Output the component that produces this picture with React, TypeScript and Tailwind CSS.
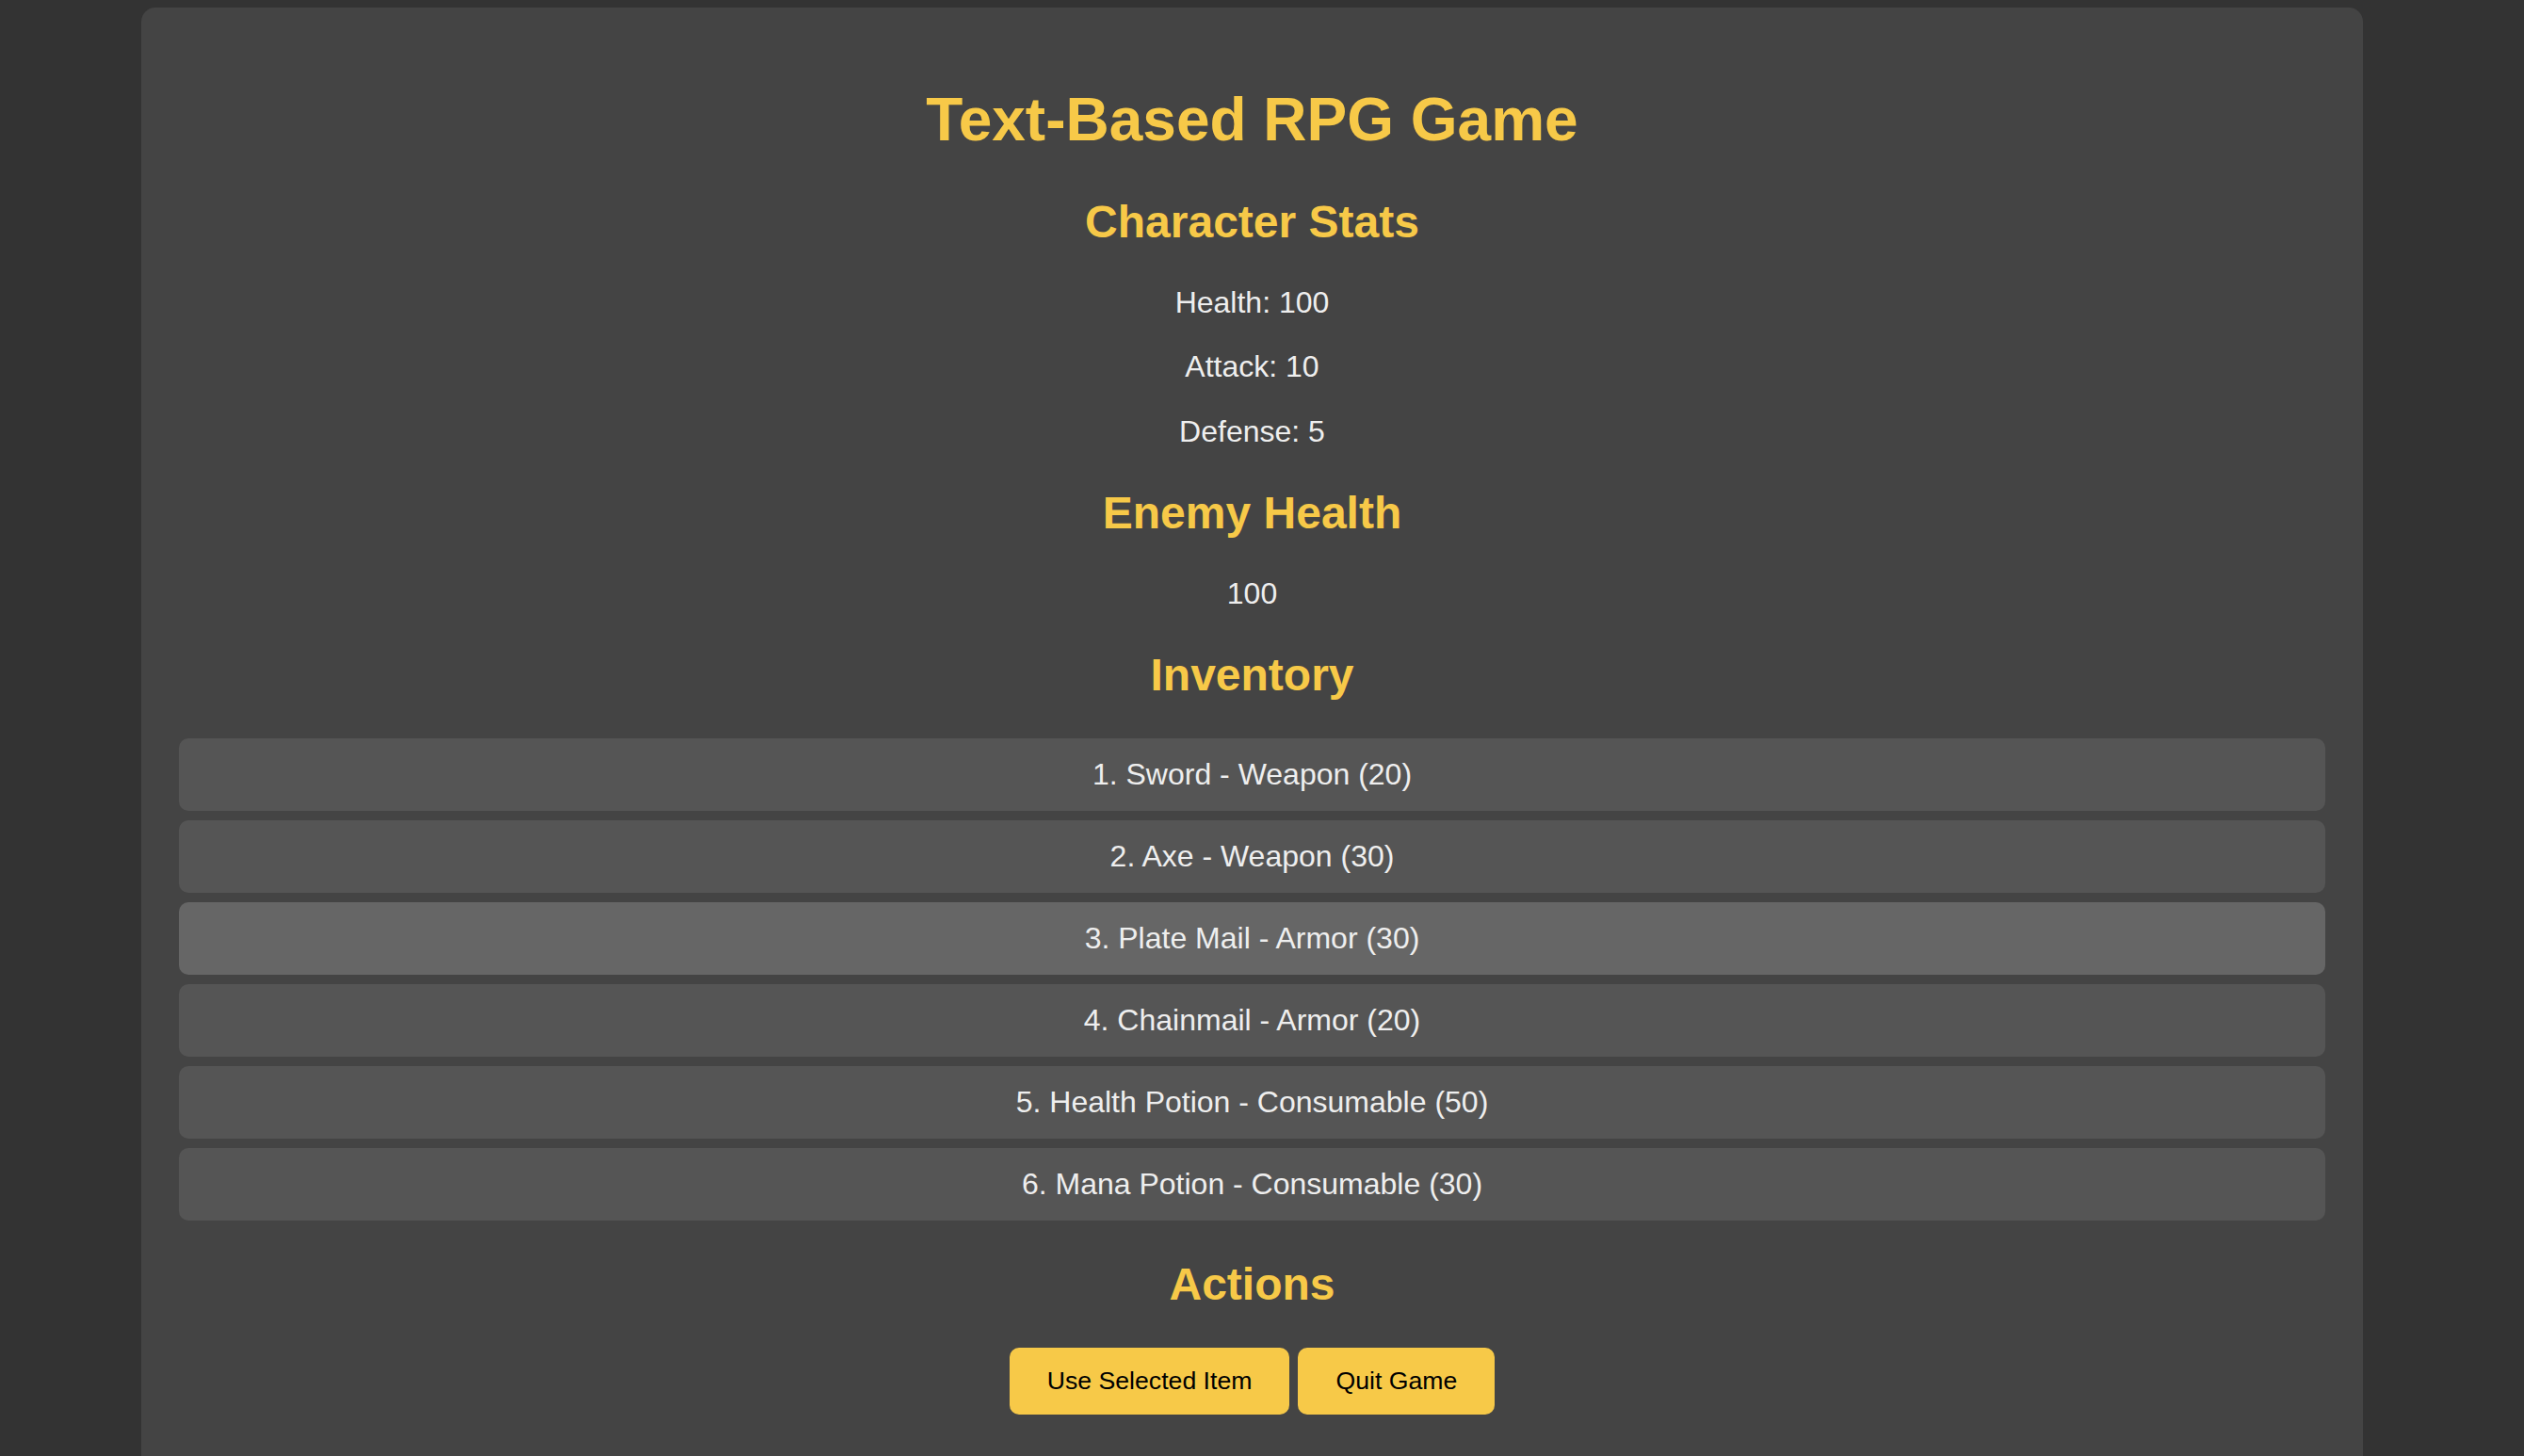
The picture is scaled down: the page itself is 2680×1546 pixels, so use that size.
const stats = [
  { label: 'Health', value: 100 },
  { label: 'Attack', value: 10 },
  { label: 'Defense', value: 5 },
];

const inventory = [
  { name: 'Sword', type: 'Weapon', value: 20 },
  { name: 'Axe', type: 'Weapon', value: 30 },
  { name: 'Plate Mail', type: 'Armor', value: 30 },
  { name: 'Chainmail', type: 'Armor', value: 20 },
  { name: 'Health Potion', type: 'Consumable', value: 50 },
  { name: 'Mana Potion', type: 'Consumable', value: 30 },
];

function Heading({ children }: { children: React.ReactNode }) {
  return <h2 className="my-[40px] text-[48px] leading-[55px] font-bold text-[#f7c948]">{children}</h2>;
}

export default function App() {
  const hovered = 2;

  return (
    <div className="min-h-screen bg-[#333333] pt-[8px] font-['Liberation_Sans',Arial,sans-serif] text-[#eeeeee]">
      <div className="ml-[150px] w-[2359px] min-h-[1560px] rounded-[15px] bg-[#444444] px-[40px] pt-[83px] pb-[40px] text-center text-[32px] leading-[36.8px]">
        <h1 className="mb-[43px] text-[64px] leading-[73.6px] font-bold text-[#f7c948]">Text-Based RPG Game</h1>

        <h2 className="mb-[40px] text-[48px] leading-[55px] font-bold text-[#f7c948]">Character Stats</h2>
        <div className="flex flex-col gap-[32px]">
          {stats.map((s) => (
            <p key={s.label}>
              {s.label}: {s.value}
            </p>
          ))}
        </div>

        <Heading>Enemy Health</Heading>
        <p>100</p>

        <Heading>Inventory</Heading>
        <ul className="flex flex-col gap-[10px]">
          {inventory.map((item, i) => (
            <li
              key={item.name}
              className={`rounded-[10px] py-[20px] leading-[37px] ${i === hovered ? 'bg-[#666666]' : 'bg-[#555555]'}`}
            >
              {i + 1}. {item.name} - {item.type} ({item.value})
            </li>
          ))}
        </ul>

        <Heading>Actions</Heading>
        <div className="flex justify-center gap-[9px]">
          <button className="rounded-[10px] bg-[#f7c948] px-[40px] py-[20px] text-[26.67px] leading-[31px] text-black">
            Use Selected Item
          </button>
          <button className="rounded-[10px] bg-[#f7c948] px-[40px] py-[20px] text-[26.67px] leading-[31px] text-black">
            Quit Game
          </button>
        </div>
      </div>
    </div>
  );
}
